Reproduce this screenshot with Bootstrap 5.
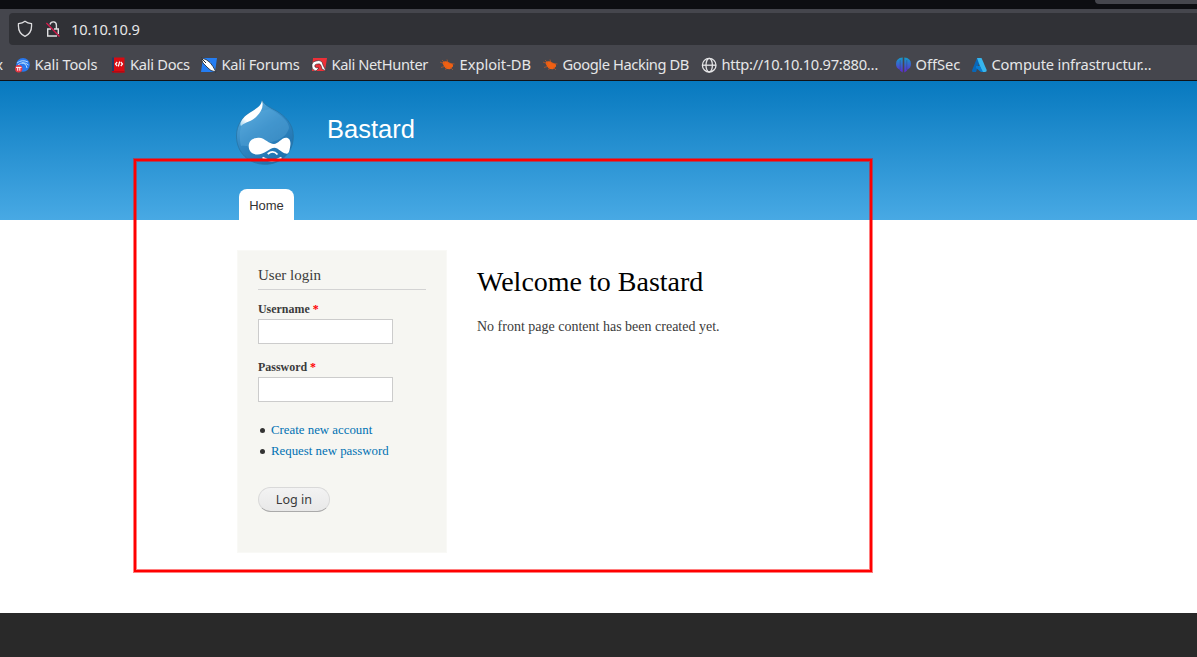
<!DOCTYPE html>
<html lang="en">
<head>
<meta charset="utf-8">
<title>Welcome to Bastard | Bastard</title>
<link href="https://cdn.jsdelivr.net/npm/bootstrap@5.3.0/dist/css/bootstrap.min.css" rel="stylesheet">
<style>
body{width:1197px;height:657px;overflow:hidden;background:#fff;color:#3b3b3b;font:14px/21px "Liberation Serif",serif}
.chrome{height:81px;background:#45464d;border-bottom:1px solid #111216;color:#e6e6e8;font-family:"Noto Sans",sans-serif}
.tabstrip{height:9px;background:#0d0e12}
.tab-edge{width:102px;height:4px;background:#45464d;border-bottom-left-radius:4px}
.urlbar{height:32px;margin:4px 0 0 9px;background:#303136;border-radius:4px 0 0 4px;padding-left:8px;font-size:14.67px}
.url-text{margin-left:10px;letter-spacing:-.17px}
.lock{margin-left:12px}
.bookmarks{display:grid;grid-template-columns:15px 95.5px 90.5px 110px 129px 103px 158px 195px 76px 225px;height:35px;font-size:14.67px;line-height:20px}
.bookmarks>div{display:flex;align-items:center;white-space:nowrap;gap:4.5px;height:34px;padding-top:5px}
.bookmarks svg{flex:none}
.bookmarks span{margin-top:-2px}
.bookmarks .cut{overflow:hidden;width:3px;justify-content:flex-end}
.fit-a{letter-spacing:-.15px}
.fit-b{letter-spacing:-.28px}
.fit-c{letter-spacing:-.39px}
.site-head{height:139px;background:linear-gradient(#0779bf,#48a9e4);padding-left:235px}
.brand-row{height:108px}
.logo{margin-top:18px}
.site-name{font:25.5px/32px "Liberation Sans",sans-serif;color:#fff;margin:32px 0 0 31px}
.home-tab{width:55px;height:31px;margin-left:4px;border-radius:8px 8px 0 0;background:#fff;color:#333;font:13px/33px "Liberation Sans",sans-serif;text-align:center}
.page-main{height:393px;padding:30px 0 0 237px}
.login{width:210px;height:303px;background:#f6f6f2;border:1px solid #f9f9f6;padding:13px 20px 0}
.login h2{font-size:15px;line-height:22px;height:26px;margin:0 0 10px;border-bottom:1px solid #d3d3d3;color:#3b3b3b;font-weight:400}
.login label{display:block;font-size:11.95px;font-weight:700;line-height:18px;height:19px}
.req{color:#f00}
.login .form-control{width:135px;height:25px;min-height:0;border:1px solid #ccc;border-radius:0;padding:2px;margin-bottom:14px}
.login ul{list-style:none;padding:0;margin:18px 0 0;font-size:12.85px;line-height:21px}
.login li{display:flex;align-items:center}
.login li::before{content:"";width:5px;height:5px;border-radius:50%;background:#333;margin:0 6.5px 1px 1.5px}
.login a{color:#0071b3;text-decoration:none}
.login .btn{display:block;width:72px;height:25px;margin-top:25px;padding:0;border:1px solid #d9d9d9;border-bottom-color:#aaa;border-radius:13px;background:linear-gradient(#f3f3f3,#e8e8e8);color:#3a3a3a;font:12.6px/22px "Noto Sans",sans-serif}
.content{padding:15px 0 0 30px}
.content h1{font-size:28px;line-height:34px;color:#000;font-weight:400;margin:0 0 17px}
.site-foot{height:44px;background:#292929}
.highlight{position:absolute;left:134px;top:159px;width:738px;height:413px;border:2px solid #f00;box-shadow:0 0 0 1px rgba(255,0,0,.5),inset 0 0 0 1px rgba(255,0,0,.5);pointer-events:none}
</style>
<script src="https://cdn.jsdelivr.net/npm/bootstrap@5.3.0/dist/js/bootstrap.bundle.min.js"></script>
</head>
<body>
<div class="chrome">
  <div class="tabstrip d-flex justify-content-end"><div class="tab-edge"></div></div>
  <div class="urlbar d-flex align-items-center">
    <svg width="16" height="18" viewBox="0 0 16 18" fill="none" stroke="#dedee0" stroke-width="1.3"><path d="M8 1.3C6 2.8 4 3.4 1.5 3.7C1 9 2.7 14 8 16.3C13.3 14 15 9 14.5 3.7C12 3.4 10 2.8 8 1.3Z"/></svg>
    <svg class="lock" width="16" height="18" viewBox="0 0 16 18" fill="none" stroke="#dedee0" stroke-width="1.4"><path d="M6 9H2.7V16H12M9 9H13.3V14M5 4.5C6 .8 11.4 1 11.4 5.2V9"/><path d="M1.4 3L14.5 16.5" stroke="#d81a4c" stroke-width="1.3"/></svg>
    <span class="url-text">10.10.10.9</span>
  </div>
  <div class="bookmarks">
    <div class="cut"><span>x</span></div>
    <div><svg width="15" height="16" viewBox="0 0 15 16"><circle cx="8" cy="7.8" r="6.9" fill="#2777ee"/><path d="M2 6Q7 2 13 5M3 8Q8 3.5 13.5 8M7 6Q11 6 12 11" stroke="#b5dcff" fill="none" stroke-width="1"/><circle cx="3.7" cy="11.7" r="3.7" fill="#e73743"/><path d="M1 10.4H6.5M2.7 10.4V13.7M4.8 10.4V13.7" stroke="#fff" fill="none"/></svg><span class="fit-a">Kali Tools</span></div>
    <div><svg width="15" height="16" viewBox="0 0 15 16"><path d="M1 .5H3V15.5H1Z" fill="#223c66"/><path d="M3 .5H13.5V15.5H3Z" fill="#d80b12"/><path d="M1 14H13.5V15.5H1Z" fill="#b80710"/><path d="M6.2 5L4.5 7L6.2 9M9.8 5L11.5 7L9.8 9M8.7 4.5L7.3 9.5" stroke="#fff" fill="none" stroke-width="1.2"/></svg><span class="fit-b">Kali Docs</span></div>
    <div><svg width="16" height="16" viewBox="0 0 16 16"><path d="M2 1H16L14 15H0Z" fill="#247df2"/><path d="M0 1L5 2.5L9 5.5L12 9.5L15 15L10 13.5L7 11L5 9L2 6Z" fill="#fff" stroke="#20242b" stroke-width=".8"/><path d="M1 2L5 6" stroke="#252930"/></svg><span class="fit-b">Kali Forums</span></div>
    <div><svg width="16" height="16" viewBox="0 0 16 16"><path d="M2 1H16L14 14H1Z" fill="#ed3038"/><path d="M1 10Q0 5 5 4Q11 2 12 8L15 14L11 12Q10 6 7 7Q3 7 4 10Q5 11 8 11L5 14Q1 13 1 10Z" fill="#fff" stroke="#242428" stroke-width=".6"/></svg><span class="fit-c">Kali NetHunter</span></div>
    <div><svg width="15" height="16" viewBox="0 0 15 16"><path d="M2.5 5.5Q5.5 2.8 9 5.5L13 7.5L13 9.5L10 12.3Q4 12.5 2.5 5.5Z" fill="#f06013"/><path d="M0 5L5 7M1 10.5L6 9M8 6L14.5 7M7 10L5.5 13M10 10L13 13M2 3L5 6M7 2.5L8 6" stroke="#d95b1b" stroke-width=".6"/></svg><span>Exploit-DB</span></div>
    <div><svg width="15" height="16" viewBox="0 0 15 16"><path d="M2.5 5.5Q5.5 2.8 9 5.5L13 7.5L13 9.5L10 12.3Q4 12.5 2.5 5.5Z" fill="#f06013"/><path d="M0 5L5 7M1 10.5L6 9M8 6L14.5 7M7 10L5.5 13M10 10L13 13M2 3L5 6M7 2.5L8 6" stroke="#d95b1b" stroke-width=".6"/></svg><span class="fit-c">Google Hacking DB</span></div>
    <div><svg width="16" height="16" viewBox="0 0 16 16" fill="none" stroke="#e4e4e6" stroke-width="1.3"><circle cx="8.2" cy="8.2" r="6.8"/><ellipse cx="8.2" cy="8.2" rx="3.2" ry="6.8"/><path d="M1.5 8.2H15"/></svg><span class="fit-b">http://10.10.10.97:880…</span></div>
    <div><svg width="15" height="16" viewBox="0 0 15 16"><defs><linearGradient id="off" x2="0" y2="1"><stop stop-color="#149bc9"/><stop offset="1" stop-color="#6126d2"/></linearGradient></defs><path d="M6.7 .5V15.5Q4 14 3.5 12.5Q0 11 0 7Q0 1 6.7 .5ZM8.3 .5V15.5Q11 14 11.5 12.5Q15 11 15 7Q15 1 8.3 .5Z" fill="url(#off)"/><path d="M4.2 3V13M10.8 3V13" stroke="#35435c" stroke-width=".4"/></svg><span>OffSec</span></div>
    <div><svg width="15" height="16" viewBox="0 0 15 16"><path d="M5 1H9L4 15H1Q-.3 15 .2 13Z" fill="#0867b8"/><path d="M5 1H9.5L14.7 13Q15 15 13 15H10Z" fill="#36b5ed"/><path d="M4 9H8L11 15H9L4 11Z" fill="#087bd0"/></svg><span class="fit-a">Compute infrastructur…</span></div>
  </div>
</div>
<header class="site-head">
  <div class="brand-row d-flex align-items-start">
    <svg class="logo" width="61" height="66" viewBox="0 0 61 66"><defs><linearGradient id="drop" x1=".2" y1="0" x2=".8" y2="1"><stop stop-color="#5cafe0"/><stop offset=".45" stop-color="#3288c4"/><stop offset="1" stop-color="#1c6fab"/></linearGradient><linearGradient id="shine" x1="1" y1="0" x2="0" y2="1"><stop stop-color="#fff"/><stop offset=".75" stop-color="#fff"/><stop offset="1" stop-color="#9ed2ee"/></linearGradient></defs><path d="M27.5 1.5C29 6 36 9 41.5 12C50 17 58.3 25 58.3 37C58.3 54 46 65.3 30 65.3C14 65.3 1.5 54 1.5 37C1.5 26 7 18 16 13C23 9 27 7 27.5 1.5Z" fill="url(#drop)" stroke="#27709f" stroke-opacity=".7"/><path d="M35 10C48 17 54 23 54 29C50 43 35 42 25 47C18 50 13 46 6 47C2 30 8 19 18 14Z" fill="#62afe0" opacity=".35"/><path d="M27 1.5C29 8 26 13 22 17C17 23 12 22 6 27C4 25 7 19 13 15C20 10 26 8 27 1.5Z" fill="url(#shine)"/><path d="M13.7 47C13.7 41 19 38.5 24 38.7C30 39 34 45 39 45C43 45 46 39 51 38.7C54.5 38.7 56 42 55.3 46.5C54.5 52 54 55.5 51 54.5C47 54 43 48.7 39.5 48.7C35 48.7 29 55.5 22.5 55.5C17 55.5 13.7 52 13.7 47Z" fill="#fff"/><path d="M32.7 55Q38 50.5 42.5 55.5" stroke="#fff" stroke-width="1.8" fill="none"/><path d="M27.5 58.5Q37 64.5 46.5 58.5" stroke="#fff" stroke-width="1.8" fill="none"/></svg>
    <div class="site-name">Bastard</div>
  </div>
  <div class="home-tab">Home</div>
</header>
<main class="page-main d-flex align-items-start">
  <form class="login">
    <h2>User login</h2>
    <label for="user">Username <span class="req">*</span></label>
    <input class="form-control" id="user" type="text">
    <label for="pass">Password <span class="req">*</span></label>
    <input class="form-control" id="pass" type="password">
    <ul><li><a href="#">Create new account</a></li><li><a href="#">Request new password</a></li></ul>
    <button class="btn" type="button">Log in</button>
  </form>
  <section class="content"><h1>Welcome to Bastard</h1><p class="mb-0">No front page content has been created yet.</p></section>
</main>
<footer class="site-foot"></footer>
<div class="highlight"></div>
</body>
</html>
